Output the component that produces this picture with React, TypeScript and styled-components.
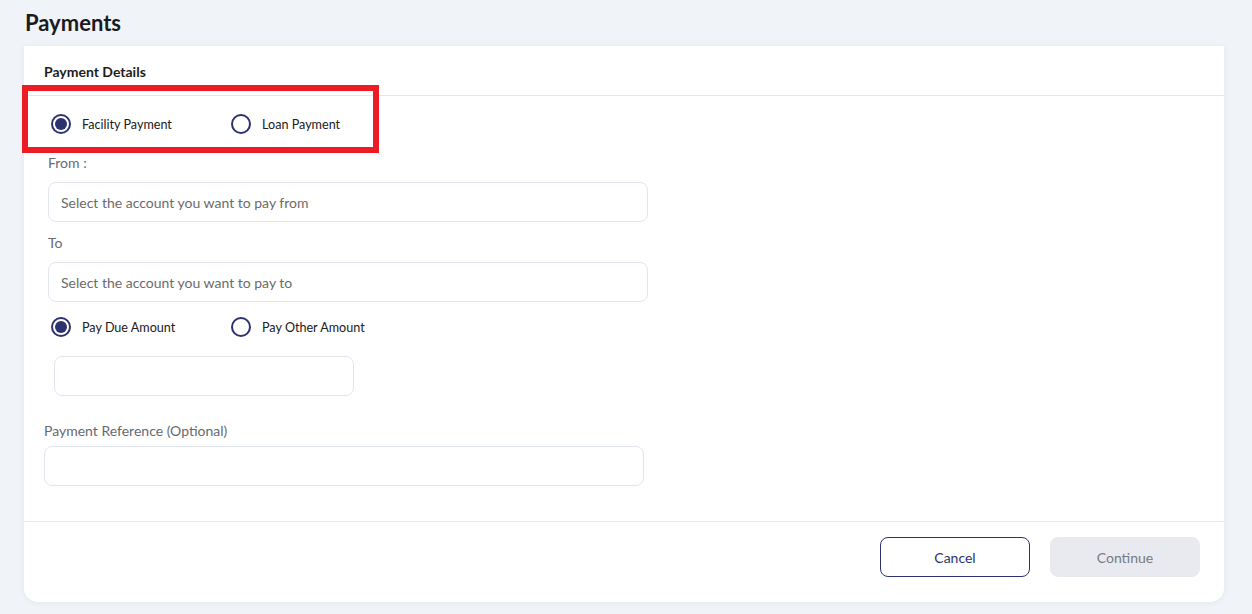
import React from "react";
import styled, { createGlobalStyle } from "styled-components";

const GlobalStyle = createGlobalStyle`
  html, body {
    margin: 0;
    padding: 0;
    background: #f0f3f7;
    font-family: "Lato", "Noto Sans", sans-serif;
    color: #1f1f1f;
  }
`;

const Page = styled.div`
  width: 1252px;
  height: 614px;
  box-sizing: border-box;
  padding: 9px 28px 12px 24px;
  display: flex;
  flex-direction: column;
`;

const Title = styled.h1`
  margin: 0 0 0 1px;
  font-size: 22px;
  font-weight: 700;
  line-height: 28px;
  color: #1b1b1f;
  height: 37px;
`;

const Card = styled.div`
  position: relative;
  flex: 1;
  background: #fff;
  border-radius: 0 0 14px 14px;
  box-shadow: 0 1px 6px rgba(30, 40, 80, 0.06);
  display: flex;
  flex-direction: column;
`;

const CardHeader = styled.div`
  height: 50px;
  box-sizing: border-box;
  padding: 17px 20px 0;
  font-size: 14px;
  font-weight: 700;
  color: #1d1d1d;
  border-bottom: 1px solid #e3e6ee;
`;

const CardBody = styled.div`
  flex: 1;
  padding: 0 20px;
  display: flex;
  flex-direction: column;
`;

const RadioRow = styled.div<{ $top: number; $indent?: number }>`
  display: flex;
  align-items: center;
  height: 20px;
  margin-top: ${(p) => p.$top}px;
  padding-left: ${(p) => p.$indent ?? 7}px;
`;

const RadioOption = styled.label`
  display: flex;
  align-items: center;
  width: 180px;
  font-size: 12.6px;
  color: #202020;
  cursor: pointer;
`;

const RadioCircle = styled.span<{ $checked: boolean }>`
  width: 20px;
  height: 20px;
  box-sizing: border-box;
  border-radius: 50%;
  border: 2px solid #2c3270;
  margin-right: 11px;
  display: flex;
  align-items: center;
  justify-content: center;
  &::after {
    content: "";
    width: 12px;
    height: 12px;
    border-radius: 50%;
    background: ${(p) => (p.$checked ? "#2c3270" : "transparent")};
  }
`;

const FieldLabel = styled.div<{ $top: number; $indent?: number }>`
  font-size: 14px;
  color: #666a70;
  margin-top: ${(p) => p.$top}px;
  padding-left: ${(p) => p.$indent ?? 4}px;
  line-height: 18px;
`;

const Input = styled.div<{ $top: number; $left?: number; $width?: number }>`
  width: ${(p) => p.$width ?? 600}px;
  height: 40px;
  box-sizing: border-box;
  margin-top: ${(p) => p.$top}px;
  margin-left: ${(p) => p.$left ?? 4}px;
  border: 1px solid #e1e5ee;
  border-radius: 8px;
  padding: 0 12px;
  display: flex;
  align-items: center;
  font-size: 14px;
  color: #6b6b6b;
`;

const CardFooter = styled.div`
  height: 81px;
  box-sizing: border-box;
  border-top: 1px solid #e3e6ee;
  display: flex;
  justify-content: flex-end;
  align-items: flex-start;
  gap: 20px;
  padding: 15px 24px 0;
`;

const Button = styled.button<{ $variant: "outline" | "disabled" }>`
  width: 150px;
  height: 40px;
  border-radius: 8px;
  font-family: inherit;
  font-size: 14px;
  border: 1px solid ${(p) => (p.$variant === "outline" ? "#2c3270" : "#e9eaef")};
  background: ${(p) => (p.$variant === "outline" ? "#fff" : "#e9eaef")};
  color: ${(p) => (p.$variant === "outline" ? "#2c3270" : "#767a82")};
`;

// red annotation frame drawn over the first radio group
const Highlight = styled.div`
  position: absolute;
  left: -2px;
  top: 39px;
  width: 357px;
  height: 68px;
  box-sizing: border-box;
  border: 6px solid #ec1c24;
  pointer-events: none;
`;

type RadioProps = { label: string; checked?: boolean };

const Radio: React.FC<RadioProps> = ({ label, checked = false }) => (
  <RadioOption>
    <RadioCircle $checked={checked} />
    {label}
  </RadioOption>
);

export default function App() {
  return (
    <>
      <GlobalStyle />
      <Page>
        <Title>Payments</Title>
        <Card>
          <CardHeader>Payment Details</CardHeader>
          <CardBody>
            <RadioRow $top={18}>
              <Radio label="Facility Payment" checked />
              <Radio label="Loan Payment" />
            </RadioRow>
            <FieldLabel $top={20}>From :</FieldLabel>
            <Input $top={10}>Select the account you want to pay from</Input>
            <FieldLabel $top={12}>To</FieldLabel>
            <Input $top={10}>Select the account you want to pay to</Input>
            <RadioRow $top={15}>
              <Radio label="Pay Due Amount" checked />
              <Radio label="Pay Other Amount" />
            </RadioRow>
            <Input $top={19} $left={10} $width={300} />
            <FieldLabel $top={26} $indent={0}>
              Payment Reference (Optional)
            </FieldLabel>
            <Input $top={6} $left={0} />
          </CardBody>
          <CardFooter>
            <Button $variant="outline">Cancel</Button>
            <Button $variant="disabled">Continue</Button>
          </CardFooter>
          <Highlight />
        </Card>
      </Page>
    </>
  );
}
